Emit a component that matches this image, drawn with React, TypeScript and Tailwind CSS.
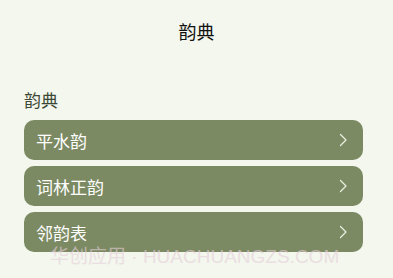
import React from 'react';

const items = ['平水韵', '词林正韵', '邻韵表'];

const Chevron: React.FC = () => (
  <svg width="10" height="14" viewBox="0 0 10 14" fill="none">
    <path d="M2.5 1.5 L8 7 L2.5 12.5" stroke="#e9eedf" strokeWidth="1.3" strokeLinecap="round" strokeLinejoin="round" />
  </svg>
);

export default function App() {
  return (
    <div
      className="relative w-[393px] h-[278px] overflow-hidden bg-[#f3f7ed]"
      style={{ fontFamily: '"Noto Sans CJK SC", "Noto Sans", sans-serif' }}
    >
      <header className="h-[62px] flex items-center justify-center">
        <h1 className="text-[18px] leading-none text-[#111]">韵典</h1>
      </header>

      <section className="pl-6 pr-[30px]">
        <h2 className="text-[17px] leading-none text-[#3c4835] mt-[29px] mb-[12px]">韵典</h2>
        <ul className="flex flex-col gap-[6px]">
          {items.map((label) => (
            <li
              key={label}
              className="h-[40px] rounded-[10px] bg-[#7b8a63] flex items-center justify-between pl-[12px] pr-[15px]"
            >
              <span className="text-[17px] leading-none text-white">{label}</span>
              <Chevron />
            </li>
          ))}
        </ul>
      </section>

      {/* watermark */}
      <div
        className="absolute left-[50px] top-[247px] text-[19px] leading-none text-[#e6cfdc] opacity-60 whitespace-nowrap pointer-events-none"
        style={{ fontFamily: '"Liberation Sans", "Noto Sans CJK SC", sans-serif' }}
      >
        华创应用 · HUACHUANGZS.COM
      </div>
    </div>
  );
}
